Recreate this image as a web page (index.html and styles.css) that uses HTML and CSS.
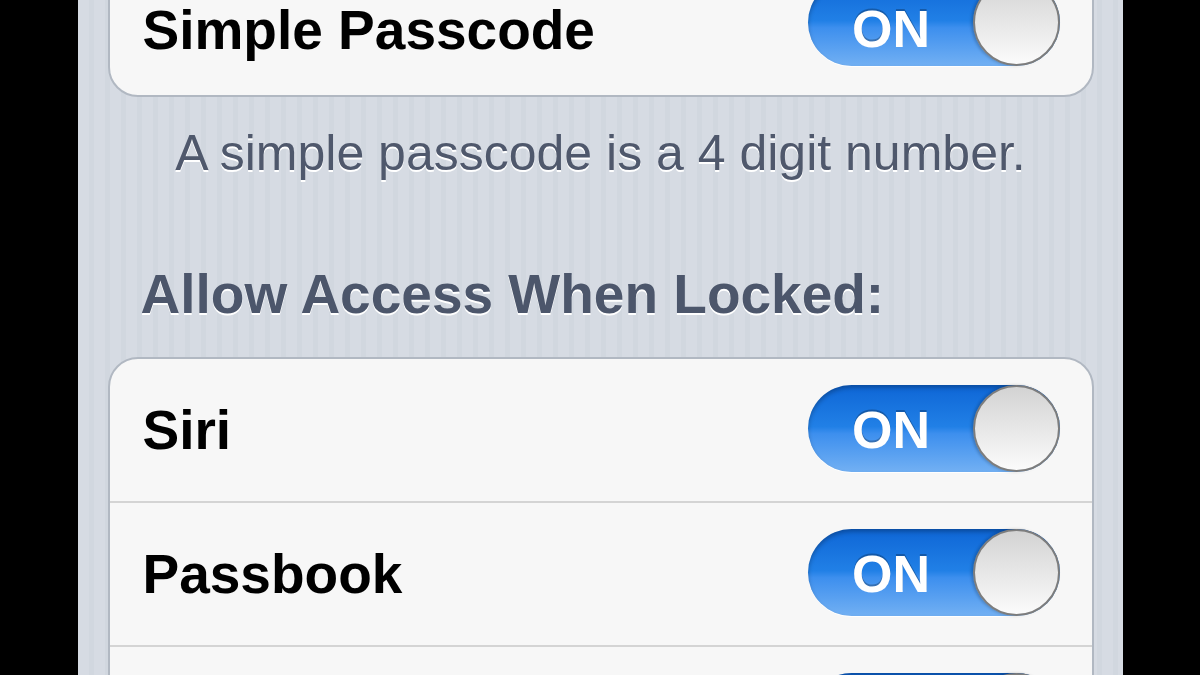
FILE: index.html
```html
<!DOCTYPE html>
<html lang="en">
<head>
<meta charset="UTF-8" />
<meta name="viewport" content="width=device-width, initial-scale=1" />
<title>Passcode Lock</title>
<link rel="stylesheet" href="styles.css">
</head>
<body>
<div class="screen">
    <div class="group group-top">
        <div class="row">
            <span class="label">Simple Passcode</span>
            <div class="switch"><span class="switch-text">ON</span><span class="knob"></span></div>
        </div>
    </div>
    <p class="footer">A simple passcode is a 4 digit number.</p>

    <h2 class="section-title">Allow Access When Locked:</h2>
    <div class="group">
        <div class="row">
            <span class="label">Siri</span>
            <div class="switch"><span class="switch-text">ON</span><span class="knob"></span></div>
        </div>
        <div class="row">
            <span class="label">Passbook</span>
            <div class="switch"><span class="switch-text">ON</span><span class="knob"></span></div>
        </div>
        <!-- next row is cut off by the bottom of the screen -->
        <div class="row">
            <span class="label"></span>
            <div class="switch"><span class="knob"></span></div>
        </div>
    </div>
</div>
</body>
</html>
```

FILE: styles.css
```css
/* Phone screen on black */
body {
    margin: 0;
    background: #000;
    font-family: 'Liberation Sans', Arial, Helvetica, sans-serif;
    display: flex;
    justify-content: center;
    height: 675px;
    overflow: hidden;
}

.screen {
    width: 1045px;
    height: 675px;
    box-sizing: border-box;
    padding: 0 29px 0 30px;
    overflow: hidden;
    background: repeating-linear-gradient(90deg, #d6dbe3 0, #d6dbe3 11px, #d1d7df 11px, #d1d7df 16px);
}

/* Grouped table */
.group {
    background: #f7f7f7;
    border: 2px solid #b1b8c2;
    border-radius: 30px;
    overflow: hidden;
}

.group-top {
    margin-top: -49px;
}

.row {
    height: 142px;
    display: flex;
    align-items: center;
    justify-content: space-between;
    padding: 0 32px 0 33px;
    border-top: 2px solid #d4d4d4;
}

.row:first-child {
    border-top: none;
}

.label {
    font-size: 55px;
    line-height: 46px;
    font-weight: bold;
    color: #000;
}

/* keep the top row's text inside the screen edge */
.group-top .label {
    padding-top: 12px;
}

.group-top .switch-text {
    padding-top: 14px;
}

.footer {
    margin: 26px 0 0;
    font-size: 50px;
    line-height: 60px;
    text-align: center;
    color: #4f586c;
    text-shadow: 0 2px 0 #fff;
}

.section-title {
    margin: 78px 0 30px;
    padding-left: 33px;
    font-size: 55px;
    line-height: 66px;
    font-weight: bold;
    color: #4c566b;
    text-shadow: 0 2px 0 #fff;
}

/* iOS 6 style switch */
.switch {
    position: relative;
    display: flex;
    align-items: center;
    width: 252px;
    height: 87px;
    margin-bottom: 4px;
    border-radius: 44px;
    background: linear-gradient(#0e66d6 0%, #2180e6 48%, #3d8fee 56%, #72b0f3 100%);
    box-shadow: inset 0 3px 4px rgba(0, 0, 0, 0.25), 0 1px 0 #fff;
}

.switch-text {
    width: 167px;
    padding-top: 4px;
    line-height: 46px;
    text-align: center;
    font-size: 52px;
    font-weight: bold;
    color: #fff;
    text-shadow: 0 -2px 0 rgba(0, 0, 0, 0.25);
}

.knob {
    position: absolute;
    right: 0;
    top: 0;
    width: 83px;
    height: 83px;
    border-radius: 50%;
    border: 2px solid #7d7d7d;
    background: linear-gradient(#d3d3d3, #fbfbfb);
    box-shadow: -2px 0 3px rgba(0, 0, 0, 0.2);
}
```
